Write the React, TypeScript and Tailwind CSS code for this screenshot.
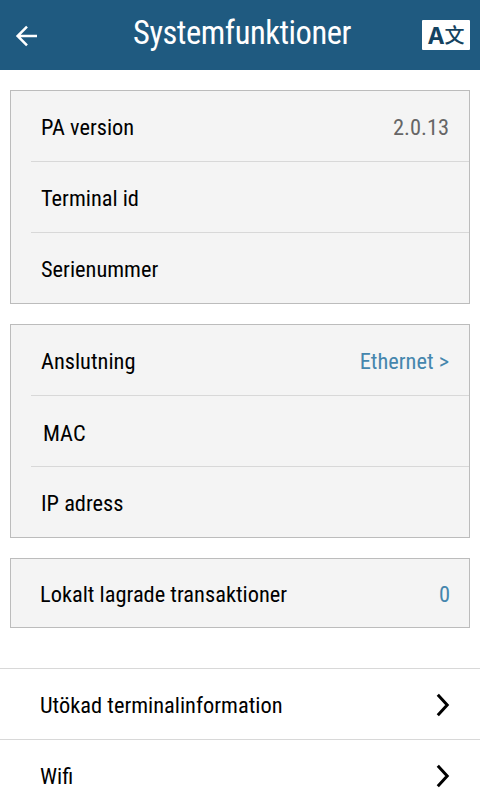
import { type ReactNode } from "react";

type Row = {
  label: string;
  value?: string;
  link?: boolean;
  className?: string;
};

const infoRows: Row[] = [
  { label: "PA version", value: "2.0.13" },
  { label: "Terminal id" },
  { label: "Serienummer" },
];

const networkRows: Row[] = [
  { label: "Anslutning", value: "Ethernet >", link: true },
  { label: "MAC", className: "pt-[3px] pl-[12px]" },
  { label: "IP adress" },
];

const menuItems = ["Utökad terminalinformation", "Wifi"];

function BackIcon() {
  return (
    <svg width="24" height="24" viewBox="0 0 24 24" fill="none" stroke="currentColor" strokeWidth="2.5">
      <path d="M23 12H3.4M13 2.6L3.6 12l9.4 9.4" />
    </svg>
  );
}

function ChevronIcon() {
  return (
    <svg width="14" height="24" viewBox="0 0 14 24" fill="none" stroke="currentColor" strokeWidth="3">
      <path d="M1.8 1.8L11.2 12L1.8 22.2" />
    </svg>
  );
}

function Card({ children }: { children: ReactNode }) {
  return <section className="border border-[#bcbcbc] bg-[#f4f4f4] pl-5">{children}</section>;
}

function InfoRow({ label, value, link, className = "pt-[2px] pl-[10px]" }: Row) {
  return (
    <div className="border-b border-[#d8d8d8] last:border-b-0">
      <div className={`flex h-[70px] items-center justify-between pr-5 ${className}`}>
        <span>{label}</span>
        {value && <span className={link ? "text-[#4586ad]" : "text-[#666]"}>{value}</span>}
      </div>
    </div>
  );
}

export default function App() {
  return (
    <main className="h-[800px] w-[480px] overflow-hidden bg-white font-['Roboto',sans-serif] text-[22.4px] leading-[26px] whitespace-nowrap text-black [font-stretch:75%]">
      <header className="flex h-[70px] items-center justify-between bg-[#1f5a80] pr-[10px] pl-[14px] text-white">
        <button aria-label="Tillbaka" className="pt-[2px]">
          <BackIcon />
        </button>
        <h1 className="pb-[4px] pl-[24px] text-[32.5px] leading-[40px] tracking-[-0.45px]">Systemfunktioner</h1>
        <button className="flex h-[30px] w-[48px] items-center justify-center rounded-[1px] bg-white text-[#14425f]">
          <span className="pt-[1px] font-['Inter',sans-serif] text-[23px] font-bold">A</span>
          <span className="font-['Noto_Sans_CJK_SC',sans-serif] text-[20px] font-medium">文</span>
        </button>
      </header>

      <div className="flex flex-col gap-5 px-[10px] pt-5 pb-10">
        <Card>
          {infoRows.map((row) => (
            <InfoRow key={row.label} {...row} />
          ))}
        </Card>
        <Card>
          {networkRows.map((row) => (
            <InfoRow key={row.label} {...row} />
          ))}
        </Card>
        <section className="flex h-[70px] items-center justify-between border border-[#bcbcbc] bg-[#f4f4f4] pt-[2px] pr-[19px] pl-[29px]">
          <span>Lokalt lagrade transaktioner</span>
          <span className="text-[#4586ad]">0</span>
        </section>
      </div>

      <nav>
        {menuItems.map((item) => (
          <a key={item} className="flex h-[71px] items-center justify-between border-t border-[#d8d8d8] pt-[2px] pr-[30px] pl-10">
            <span>{item}</span>
            <ChevronIcon />
          </a>
        ))}
      </nav>
    </main>
  );
}
